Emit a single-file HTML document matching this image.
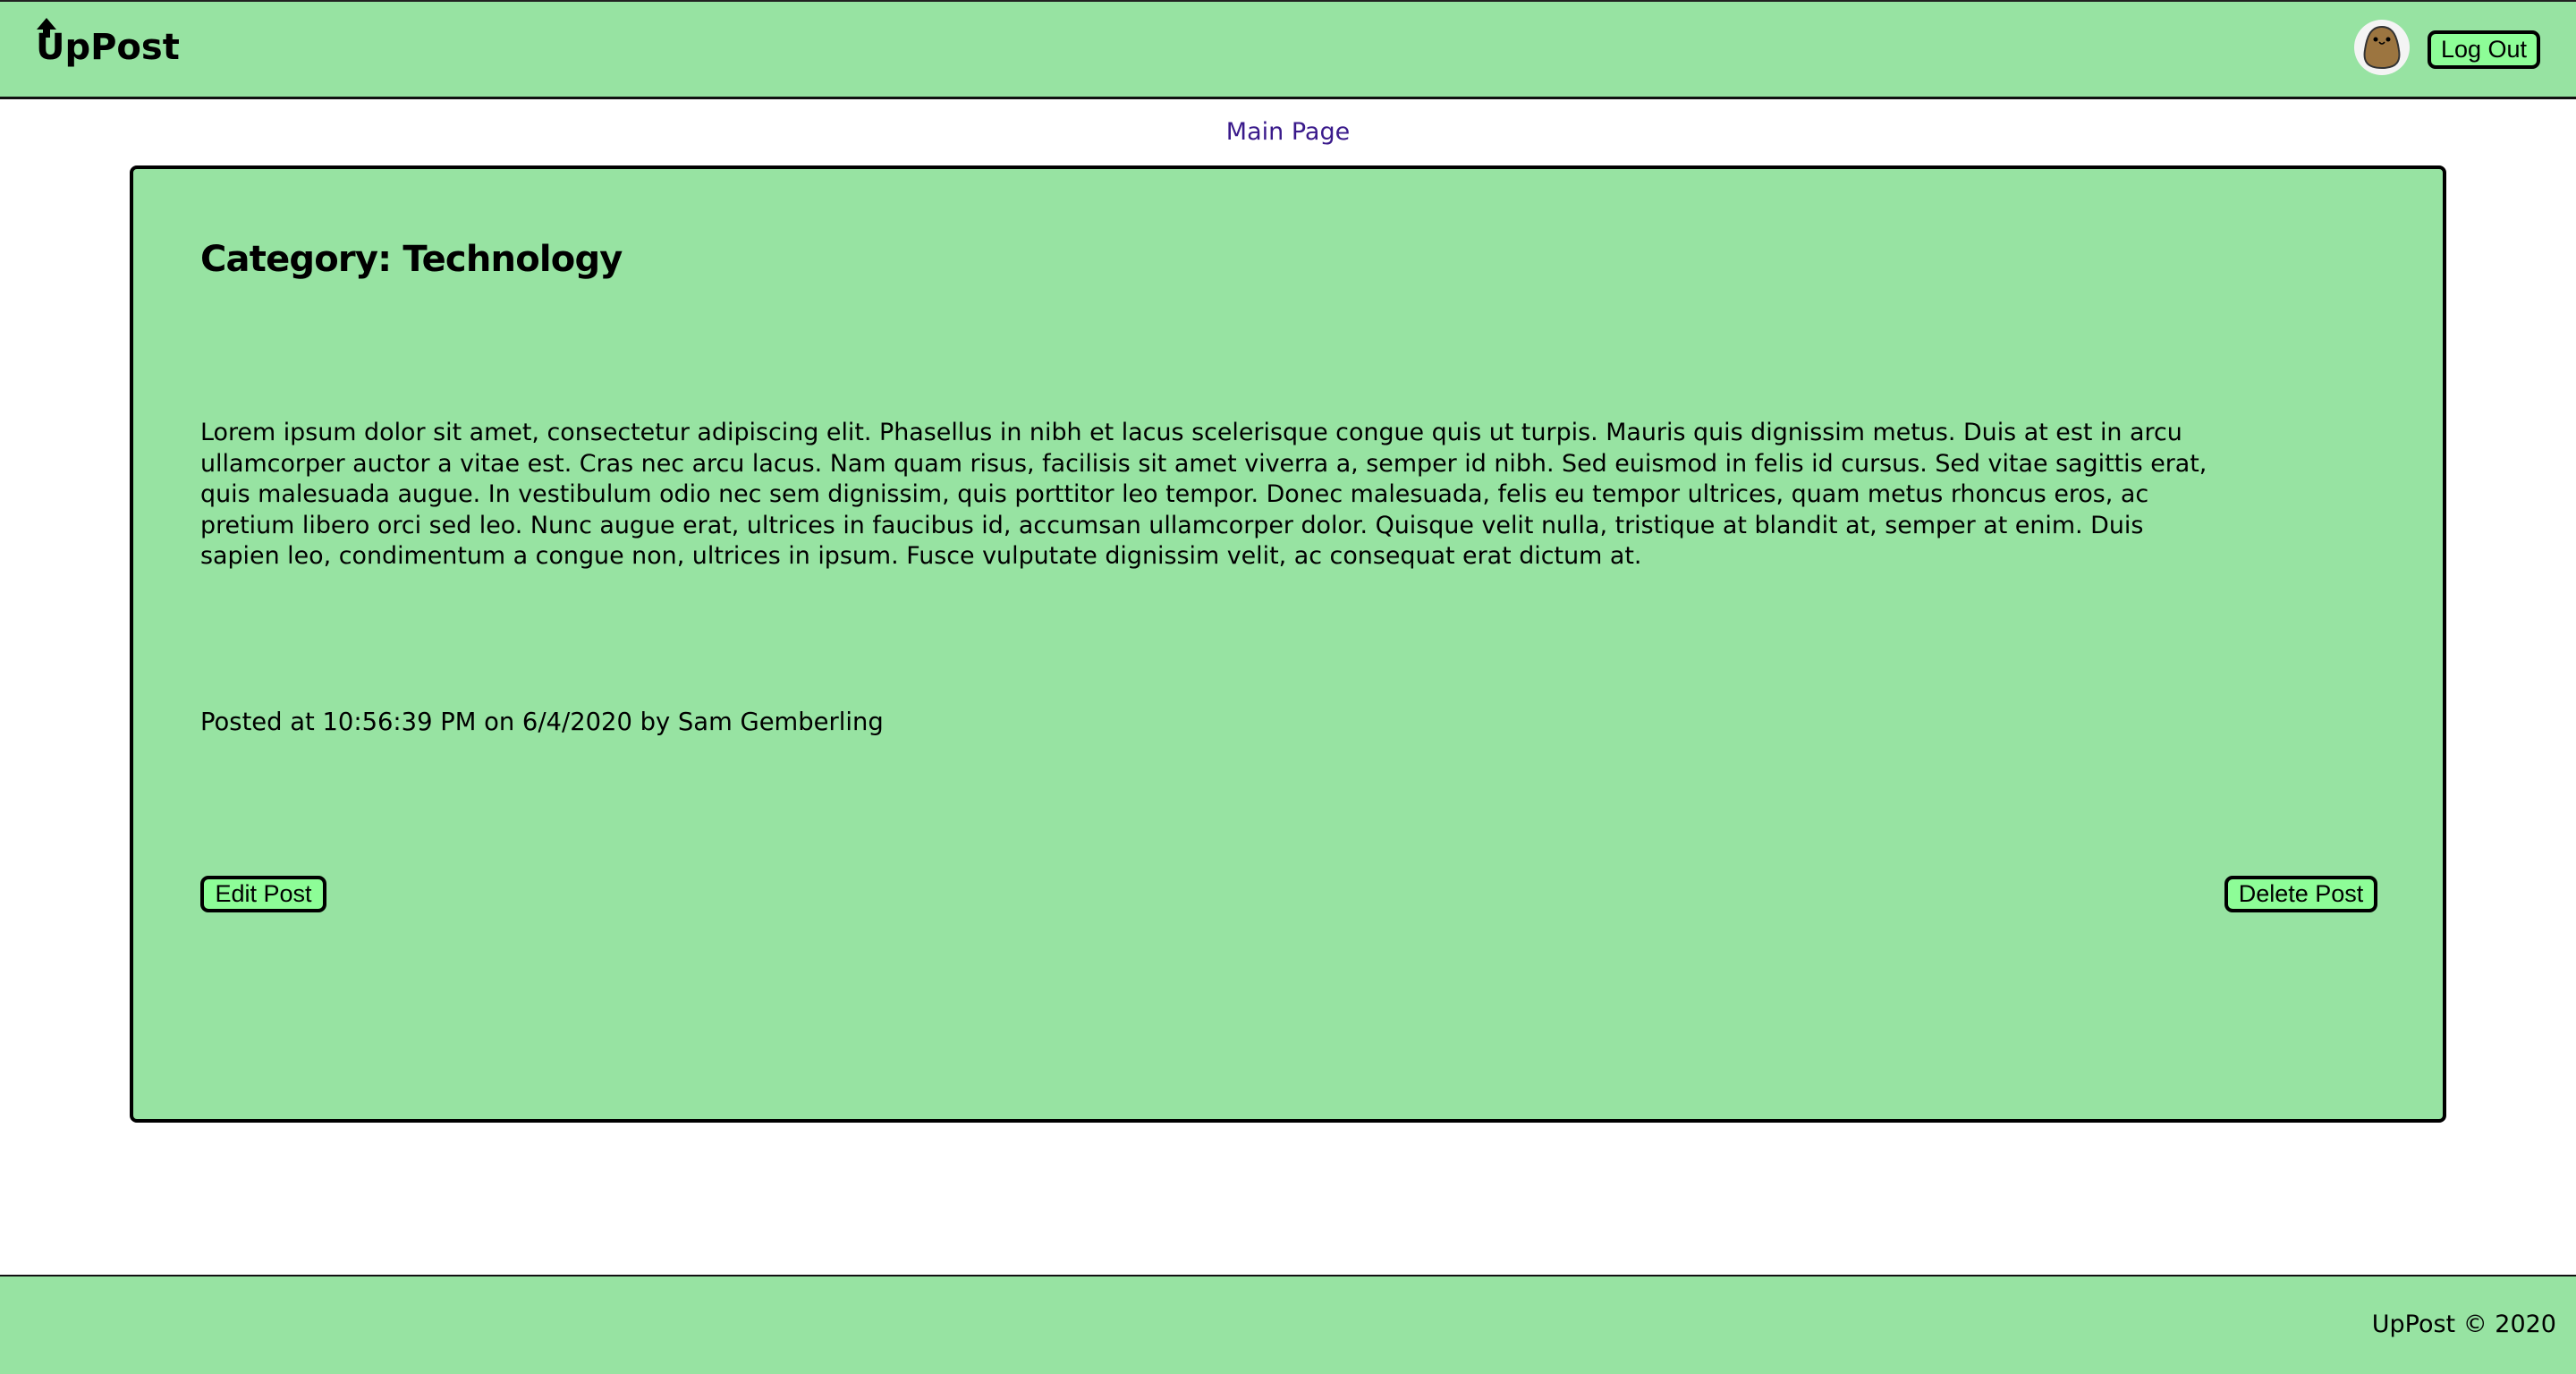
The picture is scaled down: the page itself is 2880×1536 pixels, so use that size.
<!DOCTYPE html>
<html><head><meta charset="utf-8"><style>
html,body{margin:0;padding:0;width:2880px;height:1534px;background:#fff;overflow:hidden;font-family:"DejaVu Sans","Liberation Sans",sans-serif;color:#000}
.hdr{position:absolute;left:0;top:0;width:2880px;height:106px;background:#97e3a2;border-top:2px solid #222;border-bottom:3px solid #111}
.logo{position:absolute;left:40px;top:28px;font-size:40px;font-weight:bold;letter-spacing:0}
.av{position:absolute;left:2632px;top:20px;width:62px;height:62px;border-radius:50%;background:#f4f4f4;overflow:hidden}
.btn{position:absolute;background:#8dfd97;border:4px solid #000;border-radius:9px;font-family:"Liberation Sans",sans-serif;font-size:27px;box-sizing:border-box;text-align:center}
.main{position:absolute;left:0;width:2880px;top:132px;text-align:center;color:#3a1a8b;font-size:27px}
.card{position:absolute;left:145px;top:185px;width:2590px;height:1070px;box-sizing:border-box;background:#97e3a2;border:4px solid #000;border-radius:8px}
h1{position:absolute;left:75px;top:78px;margin:0;font-size:40px;font-weight:bold;letter-spacing:-0.8px}
.p{position:absolute;left:75px;top:278px;font-size:26.9px;line-height:34.5px;white-space:nowrap}
.posted{position:absolute;left:75px;top:603px;font-size:27.4px}
.ftr{position:absolute;left:0;top:1425px;width:2880px;height:109px;background:#97e3a2;border-top:2px solid #111}
.ftr span{position:absolute;right:22px;top:38px;font-size:27px}
</style></head><body>
<div class="hdr">
 <div class="logo">UpPost</div>
 <svg style="position:absolute;left:40px;top:18px" width="24" height="22" viewBox="0 0 24 22"><path d="M12 0 L23 13 L16 13 L16 22 L8 22 L8 13 L1 13Z" fill="#000"/></svg>
 <div class="av"><svg width="62" height="62" viewBox="0 0 62 62"><path d="M31 8 C44 8 48 20 50 34 C52 46 48 54 31 54 C14 54 10 46 12 34 C14 20 18 8 31 8Z" fill="#9c7540" stroke="#333" stroke-width="2"/><circle cx="24" cy="22" r="2.5"/><circle cx="38" cy="22" r="2.5"/><path d="M28 25 Q31 29 34 25" stroke="#000" fill="none" stroke-width="1.5"/></svg></div>
 <div class="btn" style="left:2714px;top:32px;width:126px;height:43px;line-height:35px">Log Out</div>
</div>
<div class="main">Main Page</div>
<div class="card">
 <h1>Category: Technology</h1>
 <div class="p">Lorem ipsum dolor sit amet, consectetur adipiscing elit. Phasellus in nibh et lacus scelerisque congue quis ut turpis. Mauris quis dignissim metus. Duis at est in arcu<br>ullamcorper auctor a vitae est. Cras nec arcu lacus. Nam quam risus, facilisis sit amet viverra a, semper id nibh. Sed euismod in felis id cursus. Sed vitae sagittis erat,<br>quis malesuada augue. In vestibulum odio nec sem dignissim, quis porttitor leo tempor. Donec malesuada, felis eu tempor ultrices, quam metus rhoncus eros, ac<br>pretium libero orci sed leo. Nunc augue erat, ultrices in faucibus id, accumsan ullamcorper dolor. Quisque velit nulla, tristique at blandit at, semper at enim. Duis<br>sapien leo, condimentum a congue non, ultrices in ipsum. Fusce vulputate dignissim velit, ac consequat erat dictum at.</div>
 <div class="posted">Posted at 10:56:39 PM on 6/4/2020 by Sam Gemberling</div>
 <div class="btn" style="left:75px;top:790px;width:141px;height:41px;line-height:33px">Edit Post</div>
 <div class="btn" style="left:2338px;top:790px;width:171px;height:41px;line-height:33px">Delete Post</div>
</div>
<div class="ftr"><span>UpPost © 2020</span></div>
</body></html>
